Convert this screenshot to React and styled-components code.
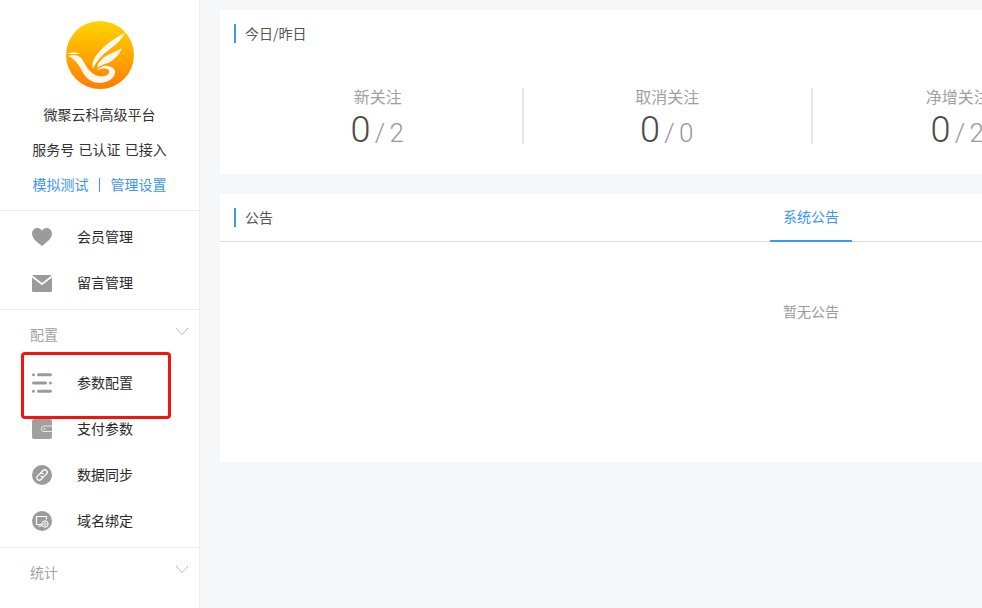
import styled, { createGlobalStyle } from 'styled-components';

const GlobalStyle = createGlobalStyle`
  html, body {
    margin: 0;
    padding: 0;
    height: 100%;
    overflow: hidden;
    background: #f6f7f9;
    font-family: "Noto Sans CJK SC", "Noto Sans", sans-serif;
  }
`;

const Layout = styled.div`
  display: flex;
  width: 982px;
  height: 608px;
  overflow: hidden;
  position: relative;
`;

const Sidebar = styled.aside`
  width: 200px;
  flex: none;
  box-sizing: border-box;
  background: #fff;
  border-right: 1px solid #eef0f3;
`;

const Profile = styled.div`
  height: 211px;
  box-sizing: border-box;
  padding-top: 21px;
  text-align: center;
  border-bottom: 1px solid #e9eaec;
`;

const LogoWrap = styled.div`
  width: 68px;
  height: 68px;
  margin: 0 auto 13px;
`;

const ProfileLine = styled.div`
  font-size: 14px;
  line-height: 24px;
  height: 35px;
  word-spacing: 1px;
  color: #333;
`;

const ProfileLink = styled.a`
  color: #3c96f4;
`;

const LinkSep = styled.span`
  display: inline-block;
  width: 1px;
  height: 14px;
  margin: 0 10.5px;
  background: #3c96f4;
  vertical-align: -2px;
`;

const MenuGroup = styled.div`
  box-sizing: border-box;
  padding: ${(p) => (p.$top ? '3px' : '0')} 0 3px;
  border-bottom: ${(p) => (p.$last ? 'none' : '1px solid #e9eaec')};
`;

const GroupHead = styled.div`
  height: 50px;
  box-sizing: border-box;
  padding: 0 10px 0 30px;
  display: flex;
  align-items: center;
  justify-content: space-between;
  font-size: 14px;
  color: #a3a3a3;
`;

const Chevron = styled.svg`
  width: 14px;
  height: 9px;
  margin-top: -7px;
  fill: none;
  stroke: #b5bcc7;
  stroke-width: 1;
`;

const MenuRow = styled.div`
  height: 46px;
  display: flex;
  align-items: center;
  padding-left: 32px;
  font-size: 14px;
  color: #2a2a2a;
`;

const RowText = styled.span`
  margin-top: -2px;
`;

const MenuIcon = styled.svg`
  width: 20px;
  height: 20px;
  margin-right: 25px;
  flex: none;
`;

const Highlight = styled.div`
  position: absolute;
  left: 21px;
  top: 352px;
  width: 150px;
  height: 67px;
  box-sizing: border-box;
  border: 3px solid #f5130d;
  border-radius: 4px;
`;

const Main = styled.main`
  flex: none;
  width: 1202px;
  box-sizing: border-box;
  padding: 10px 0 0 20px;
`;

const Card = styled.section`
  background: #fff;
  height: ${(p) => p.$height}px;
  margin-bottom: 20px;
`;

const CardHead = styled.div`
  height: 47px;
  display: flex;
  align-items: center;
`;

const TabHead = styled.div`
  height: 48px;
  box-sizing: border-box;
  display: grid;
  grid-template-columns: 1fr 82px 1fr;
  align-items: start;
  border-bottom: 1px solid #dcdcdc;
`;

const CardTitle = styled.div`
  border-left: 2px solid #3c96f4;
  margin: ${(p) => (p.$tabbed ? '14px' : '0')} 0 0 14px;
  padding-left: 9px;
  height: 19px;
  line-height: 19px;
  font-size: 14px;
  color: #555;
`;

const Stats = styled.div`
  display: grid;
  grid-template-columns: repeat(3, 289.5px);
  margin: 31px 0 0 14px;
`;

const Stat = styled.div`
  height: 56px;
  text-align: center;
  box-sizing: border-box;
  border-right: ${(p) => (p.$last ? 'none' : '2px solid #e7e7e7')};
`;

const StatLabel = styled.div`
  font-size: 16px;
  line-height: 18px;
  margin-top: -1px;
  color: #a0a0a0;
`;

const StatValue = styled.div`
  font-family: Roboto, "Liberation Sans", sans-serif;
  font-weight: 300;
  margin-top: 5px;
  line-height: 40px;
  font-size: 26px;
  word-spacing: -2px;
  margin-left: -1px;
  color: #999;
`;

const StatToday = styled.span`
  font-size: 36px;
  color: #4a4a4a;
`;

const Tab = styled.div`
  height: 48px;
  box-sizing: border-box;
  text-align: center;
  line-height: 44px;
  font-size: 14px;
  color: #3c96f4;
  border-bottom: 2px solid #3c96f4;
`;

const Empty = styled.div`
  padding-top: 59px;
  text-align: center;
  font-size: 14px;
  line-height: 20px;
  color: #999;
`;

const Logo = () => (
  <svg viewBox="0 0 68 68" width="68" height="68">
    <defs>
      <linearGradient id="logoFill" x1="0" y1="0" x2="0" y2="1">
        <stop offset="0" stopColor="#ffd500" />
        <stop offset="1" stopColor="#ff7d00" />
      </linearGradient>
    </defs>
    <circle cx="34" cy="34" r="34" fill="url(#logoFill)" />
    <g fill="#fff" fillOpacity=".93">
      <path d="M2 35C6 33 11 34 14 36C18 39 20 47 25 51C29 55 36 57 41 54C44 52 44 49 41 48C38 47 34 48 31 49C34 46 38 44 42 45C47 46 50 49 49 52C48 58 41 62 33 62C25 62 19 56 16 50C13 44 9 38 2 35Z" />
      <path d="M1 33C5 31 10 31 14 33C10 33 5 33 1 33Z" />
      <path d="M59 12C48 17 34 27 28 38C26 41 26 45 27 48C31 39 37 33 44 28C51 23 56 18 59 12Z" />
      <path d="M56 27C50 31 41 33 36 38C33 41 31 44 31 47C36 43 42 43 47 39C51 36 54 32 56 27Z" />
    </g>
  </svg>
);

const icons = {
  heart: (
    <path fill="#9b9b9b" d="M10 19C5 15 0 11.500 0 6.500c0-3 2.300-5.500 5.300-5.500 2 0 3.700 1 4.700 2.700C11 2 12.700 1 14.700 1 17.700 1 20 3.500 20 6.500c0 5-5 8.500-10 12.500z" />
  ),
  mail: (
    <>
      <path fill="#9b9b9b" d="M1.500 2h17c.5 0 .9.200 1.100.500L10 10 .4 2.500C.6 2.200 1 2 1.500 2z" />
      <path fill="#9b9b9b" d="M0 4.500l10 7.800L20 4.500V17.500c0 .8-.7 1.500-1.500 1.500h-17C.7 19 0 18.300 0 17.500z" />
    </>
  ),
  list: (
    <g fill="#9b9b9b">
      <circle cx="1.500" cy="1.800" r="1.500" />
      <rect x="5" y=".3" width="15" height="3" rx="1.500" />
      <rect x="0" y="8.500" width="15" height="3" rx="1.500" />
      <circle cx="18.500" cy="10" r="1.500" />
      <circle cx="1.500" cy="18.200" r="1.500" />
      <rect x="5" y="16.700" width="15" height="3" rx="1.500" />
    </g>
  ),
  wallet: (
    <>
      <rect width="20" height="20" rx="2" fill="#a0a0a0" />
      <path fill="none" stroke="#e8e8e8" d="M20 7h-8a2.500 2.500 0 0 0 0 5.500h8" />
      <circle cx="12.500" cy="9.700" r="1" fill="#e8e8e8" />
    </>
  ),
  link: (
    <>
      <circle cx="10" cy="10" r="10" fill="#9b9b9b" />
      <g fill="none" stroke="#fff" strokeWidth="1.300" strokeLinecap="round">
        <path d="M9 7.500l2-2a2.400 2.400 0 0 1 3.500 3.400l-2.200 2.200a2.400 2.400 0 0 1-3.400 0" />
        <path d="M11 12.500l-2 2a2.400 2.400 0 0 1-3.500-3.400l2.200-2.200a2.400 2.400 0 0 1 3.400 0" />
      </g>
    </>
  ),
  domain: (
    <>
      <circle cx="10" cy="10" r="10" fill="#9b9b9b" />
      <path fill="none" stroke="#fff" strokeWidth="1.200" d="M9.500 13.500H4.500v-8h10v3" />
      <path stroke="#fff" strokeWidth="1.200" d="M6.500 15h3" />
      <circle cx="13" cy="13" r="3.200" fill="none" stroke="#fff" />
      <path stroke="#fff" strokeWidth=".8" d="M9.800 13h6.400M13 9.800v6.400" />
    </>
  ),
};

const MenuItem = ({ icon, label }) => (
  <MenuRow>
    <MenuIcon viewBox="0 0 20 20">{icons[icon]}</MenuIcon>
    <RowText>{label}</RowText>
  </MenuRow>
);

const GroupTitle = ({ label }) => (
  <GroupHead>
    <RowText>{label}</RowText>
    <Chevron viewBox="0 0 14 9">
      <path d="M1 1l6 6.500L13 1" />
    </Chevron>
  </GroupHead>
);

const stats = [
  { label: '新关注', today: 0, yesterday: 2 },
  { label: '取消关注', today: 0, yesterday: 0 },
  { label: '净增关注', today: 0, yesterday: 2 },
];

export default function App() {
  return (
    <>
      <GlobalStyle />
      <Layout>
        <Sidebar>
          <Profile>
            <LogoWrap>
              <Logo />
            </LogoWrap>
            <ProfileLine>微聚云科高级平台</ProfileLine>
            <ProfileLine>服务号 已认证 已接入</ProfileLine>
            <ProfileLine>
              <ProfileLink>模拟测试</ProfileLink>
              <LinkSep />
              <ProfileLink>管理设置</ProfileLink>
            </ProfileLine>
          </Profile>
          <MenuGroup $top>
            <MenuItem icon="heart" label="会员管理" />
            <MenuItem icon="mail" label="留言管理" />
          </MenuGroup>
          <MenuGroup>
            <GroupTitle label="配置" />
            <MenuItem icon="list" label="参数配置" />
            <MenuItem icon="wallet" label="支付参数" />
            <MenuItem icon="link" label="数据同步" />
            <MenuItem icon="domain" label="域名绑定" />
          </MenuGroup>
          <MenuGroup $last>
            <GroupTitle label="统计" />
          </MenuGroup>
        </Sidebar>
        <Main>
          <Card $height={164}>
            <CardHead>
              <CardTitle>今日/昨日</CardTitle>
            </CardHead>
            <Stats>
              {stats.map((s, i) => (
                <Stat key={s.label} $last={i === stats.length - 1}>
                  <StatLabel>{s.label}</StatLabel>
                  <StatValue>
                    <StatToday>{s.today}</StatToday> / {s.yesterday}
                  </StatValue>
                </Stat>
              ))}
            </Stats>
          </Card>
          <Card $height={268}>
            <TabHead>
              <CardTitle $tabbed>公告</CardTitle>
              <Tab>系统公告</Tab>
            </TabHead>
            <Empty>暂无公告</Empty>
          </Card>
        </Main>
        <Highlight />
      </Layout>
    </>
  );
}
